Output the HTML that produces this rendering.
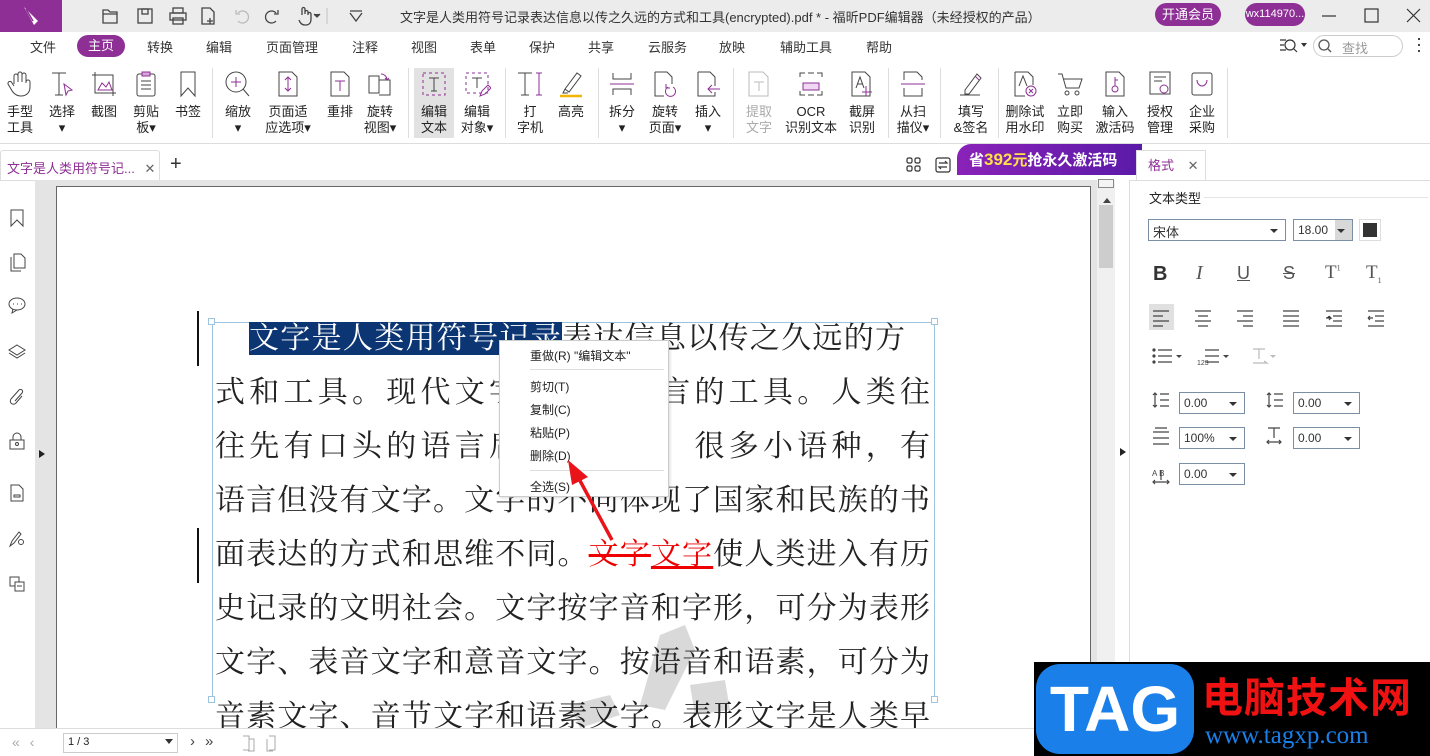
<!DOCTYPE html>
<html><head><meta charset="utf-8">
<style>
*{margin:0;padding:0;box-sizing:border-box}
body{width:1430px;height:756px;overflow:hidden;position:relative;background:#fff;font-family:"Liberation Sans","Noto Sans CJK SC",sans-serif;color:#333;font-size:13px}
.a{position:absolute}
.title{left:0;top:0;width:1430px;height:32px;background:#ececec}
.logo{left:0;top:0;width:62px;height:32px;background:#8e2f95}
.menu span{position:absolute;top:37px;font-size:13px;color:#333}
.rb{position:absolute;top:70px;width:44px;text-align:center;font-size:13px;line-height:16px;color:#222}
.rb svg{display:block;margin:0 auto 6px;width:28px;height:28px}
.sep{position:absolute;top:68px;width:1px;height:70px;background:#ddd}
.line{position:absolute;left:215px;width:715px;font-family:"Liberation Serif","Noto Serif CJK SC",serif;font-size:30px;line-height:40px;color:#222;text-align:justify;text-align-last:justify;white-space:nowrap;overflow:hidden}
.sb svg{position:absolute;left:7px;width:20px;height:20px}
.dd{position:absolute;height:22px;border:1px solid #7a8fa6;background:#fff;font-size:12px;padding:3px 4px}
.dd:after{content:"";position:absolute;right:7px;top:9px;border:4px solid transparent;border-top:4px solid #333}
</style></head><body>
<div class="a title"></div>
<div class="a logo"><svg width="62" height="32"><path d="M24 7 L38 21 L34 25 Z" fill="#fff"/><path d="M26 9 L33 21" stroke="#8e2f95" stroke-width="1.5"/></svg></div>
<svg class="a" style="left:100px;top:5px" width="270" height="22" fill="none" stroke="#444" stroke-width="1.3">
<path d="M3 5h5l2 2h7v11H3z M3 9h14"/>
<rect x="38" y="4" width="14" height="14"/><rect x="42" y="4" width="6" height="5"/>
<rect x="70" y="8" width="16" height="7"/><rect x="73" y="3" width="10" height="5"/><rect x="73" y="13" width="10" height="6"/>
<path d="M102 3h8l4 4v12h-12z M110 13v6 M107 16h6"/>
<path d="M138 8 a6 6 0 1 1 0 8 M136 5v4h4" stroke="#bbb"/>
<path d="M176 8 a6 6 0 1 0 0 8 M178 5v4h-4"/>
<path d="M202 10v-6a1.5 1.5 0 0 1 3 0v5 M205 9v-2a1.5 1.5 0 0 1 3 0v3 M208 9a1.5 1.5 0 0 1 3 0v5c0 4-2 6-5 6h-1c-3 0-5-2-6-5"/>
<path d="M214 9l3 3 3-3" fill="#444"/>
<path d="M227 3v16" stroke="#ccc"/>
<path d="M250 6h12 M250 8l6 8 6-8"/>
</svg>
<div class="a" style="left:400px;top:7px;font-size:13px;color:#333;white-space:nowrap">文字是人类用符号记录表达信息以传之久远的方式和工具(encrypted).pdf * - 福昕PDF编辑器（未经授权的产品）</div>
<div class="a" style="left:1155px;top:3px;width:66px;height:23px;border-radius:12px;background:#8e2f95;color:#fff;font-size:13px;line-height:23px;text-align:center">开通会员</div>
<div class="a" style="left:1245px;top:3px;width:60px;height:23px;border-radius:12px;background:#8e2f95;color:#fff;font-size:11px;line-height:23px;text-align:center">wx114970...</div>
<svg class="a" style="left:1315px;top:6px" width="110" height="20" stroke="#333" stroke-width="1.2" fill="none"><path d="M7 10h14"/><rect x="50" y="3" width="13" height="13"/><path d="M92 3l13 13 M105 3l-13 13"/></svg>
<div class="menu">
<span style="left:30px">文件</span>
<span style="left:77px;top:35px;width:48px;height:22px;border-radius:11px;background:#8e2f95;color:#fff;text-align:center;line-height:22px">主页</span>
<span style="left:147px">转换</span><span style="left:206px">编辑</span><span style="left:266px">页面管理</span><span style="left:352px">注释</span><span style="left:411px">视图</span><span style="left:470px">表单</span><span style="left:529px">保护</span><span style="left:588px">共享</span><span style="left:648px">云服务</span><span style="left:719px">放映</span><span style="left:780px">辅助工具</span><span style="left:866px">帮助</span>
</div>
<svg class="a" style="left:1278px;top:37px" width="30" height="16" fill="none" stroke="#333" stroke-width="1.2"><path d="M2 3h6 M2 8h4 M2 13h6"/><circle cx="12" cy="8" r="5"/><path d="M16 12l3 3"/><path d="M23 6l3 4 3-4z" fill="#333" stroke="none"/></svg>
<div class="a" style="left:1313px;top:35px;width:90px;height:22px;border:1px solid #ccc;border-radius:11px;font-size:13px;color:#999;padding:2px 0 0 28px">查找</div>
<svg class="a" style="left:1318px;top:39px" width="14" height="14" fill="none" stroke="#555" stroke-width="1.3"><circle cx="6" cy="6" r="5"/><path d="M10 10l3 3"/></svg>
<div class="a" style="left:1418px;top:38px;width:2px;height:2px;background:#444;box-shadow:0 6px #444,0 12px #444"></div>
<div class="a" style="left:414px;top:68px;width:40px;height:70px;background:#e2e2e2"></div>
<div class="sep" style="left:212px"></div><div class="sep" style="left:408px"></div><div class="sep" style="left:505px"></div><div class="sep" style="left:598px"></div><div class="sep" style="left:733px"></div><div class="sep" style="left:888px"></div><div class="sep" style="left:940px"></div><div class="sep" style="left:998px"></div><div class="sep" style="left:1227px"></div>
<div class="rb" style="left:-2px"><svg viewBox="0 0 28 28" fill="none" stroke="#444"><path d="M8 14V6a2 2 0 0 1 4 0v6 M12 11V4a2 2 0 0 1 4 0v8 M16 11V5a2 2 0 0 1 4 0v8 M20 12a2 2 0 0 1 4 0v5c0 6-4 9-9 9s-8-3-10-7l-3-5a2 2 0 0 1 4-1l2 3"/></svg>手型<br>工具</div>
<div class="rb" style="left:40px"><svg viewBox="0 0 28 28" fill="none" stroke="#444"><path d="M4 3h14 M11 3v22 M7 25h8"/><path d="M16 14l8 6-4 1-2 4z" stroke="#8e2f95"/></svg>选择<br>▾</div>
<div class="rb" style="left:82px"><svg viewBox="0 0 28 28" fill="none" stroke="#444"><path d="M5 2v21h21 M2 5h21v21"/><path d="M8 20l4-7 4 4 3-5 3 8z" stroke="#8e2f95"/></svg>截图</div>
<div class="rb" style="left:124px"><svg viewBox="0 0 28 28" fill="none" stroke="#444"><rect x="5" y="4" width="18" height="22" rx="2"/><rect x="10" y="2" width="8" height="4" fill="#d9a6dc" stroke="#8e2f95"/><path d="M9 11h10 M9 15h10 M9 19h10"/></svg>剪贴<br>板▾</div>
<div class="rb" style="left:166px"><svg viewBox="0 0 28 28" fill="none" stroke="#444"><path d="M7 2h14v24l-7-8-7 8z"/></svg>书签</div>
<div class="rb" style="left:216px"><svg viewBox="0 0 28 28" fill="none" stroke="#444"><circle cx="12" cy="12" r="10"/><path d="M19 19l6 7"/><path d="M12 7v10 M7 12h10" stroke="#8e2f95"/></svg>缩放<br>▾</div>
<div class="rb" style="left:262px;width:52px"><svg viewBox="0 0 28 28" fill="none" stroke="#444"><path d="M5 2h13l5 5v19H5z"/><path d="M14 7v14 M11 10l3-3 3 3 M11 18l3 3 3-3" stroke="#8e2f95"/></svg>页面适<br>应选项▾</div>
<div class="rb" style="left:318px"><svg viewBox="0 0 28 28" fill="none" stroke="#444"><path d="M5 2h13l5 5v19H5z"/><path d="M9 11h10 M14 11v10" stroke="#8e2f95"/></svg>重排</div>
<div class="rb" style="left:358px"><svg viewBox="0 0 28 28" fill="none" stroke="#444"><path d="M3 6h10v17H3z M13 10h11v15H13"/><path d="M15 4a6 6 0 0 1 6 6 M19 8l2 2 2-2" stroke="#8e2f95"/></svg>旋转<br>视图▾</div>
<div class="rb" style="left:412px"><svg viewBox="0 0 28 28" fill="none" stroke="#8e2f95"><path d="M3 3h22v22H3z" stroke-dasharray="3 3"/><path d="M9 8h10 M14 8v13 M11 21h6" stroke="#444"/></svg>编辑<br>文本</div>
<div class="rb" style="left:455px"><svg viewBox="0 0 28 28" fill="none" stroke="#8e2f95"><path d="M3 3h22v20H3z" stroke-dasharray="3 3"/><path d="M9 8h10 M14 8v10" stroke="#444"/><path d="M17 26l2-5 6-6 3 3-6 6z"/></svg>编辑<br>对象▾</div>
<div class="rb" style="left:508px"><svg viewBox="0 0 28 28" fill="none" stroke="#444"><path d="M2 3h14 M9 3v22 M5 25h8"/><path d="M20 3h6 M23 3v22 M20 25h6" stroke="#8e2f95"/></svg>打<br>字机</div>
<div class="rb" style="left:549px"><svg viewBox="0 0 28 28" fill="none" stroke="#444"><path d="M8 19l12-16 4 3-12 16z M8 19l-2 4h5"/><path d="M3 26h22" stroke="#f2b600" stroke-width="2.5"/></svg>高亮</div>
<div class="rb" style="left:600px"><svg viewBox="0 0 28 28" fill="none" stroke="#444"><path d="M5 3v6h18V3 M5 25v-6h18v6"/><path d="M2 14h24" stroke="#8e2f95"/></svg>拆分<br>▾</div>
<div class="rb" style="left:643px"><svg viewBox="0 0 28 28" fill="none" stroke="#444"><path d="M4 2h12l5 5v7 M4 2v24h9"/><path d="M17 17a5 5 0 1 0 5 0 M15 14v4h4" stroke="#8e2f95"/></svg>旋转<br>页面▾</div>
<div class="rb" style="left:686px"><svg viewBox="0 0 28 28" fill="none" stroke="#444"><path d="M4 2h12l5 5v9 M4 2v24h17v-4"/><path d="M26 19H14 M18 15l-4 4 4 4" stroke="#8e2f95"/></svg>插入<br>▾</div>
<div class="rb" style="left:737px;color:#aaa"><svg viewBox="0 0 28 28" fill="none" stroke="#bbb"><path d="M4 2h14l5 5v19H4z M9 12h10 M14 12v9"/></svg>提取<br>文字</div>
<div class="rb" style="left:781px;width:60px"><svg viewBox="0 0 28 28" fill="none" stroke="#444"><path d="M3 7V3h5 M20 3h5v4 M3 21v4h5 M20 25h5v-4 M11 3h6 M11 25h6"/><rect x="6" y="13" width="16" height="7" fill="#f0d8f2" stroke="#8e2f95"/></svg>OCR<br>识别文本</div>
<div class="rb" style="left:840px"><svg viewBox="0 0 28 28" fill="none" stroke="#444"><path d="M4 2h13l5 5v19H4z M8 18l4-11 4 11 M9 14h6"/><path d="M18 16v10 M14 22h10" stroke="#8e2f95"/></svg>截屏<br>识别</div>
<div class="rb" style="left:891px"><svg viewBox="0 0 28 28" fill="none" stroke="#444"><path d="M5 10V2h13l5 5v3 M5 18v8h18v-8"/><path d="M2 14h24" stroke="#8e2f95"/></svg>从扫<br>描仪▾</div>
<div class="rb" style="left:949px"><svg viewBox="0 0 28 28" fill="none" stroke="#444"><path d="M8 20l12-16 4 4-12 16H8z"/><path d="M18 6l4 4" stroke="#8e2f95"/><path d="M3 25h20"/></svg>填写<br>&amp;签名</div>
<div class="rb" style="left:1002px;width:46px"><svg viewBox="0 0 28 28" fill="none" stroke="#444"><path d="M4 2h13l5 5v8 M4 2v24h10 M8 16l4-10 4 10"/><circle cx="20" cy="21" r="5" stroke="#8e2f95"/><path d="M18 19l4 4 M22 19l-4 4" stroke="#8e2f95"/></svg>删除试<br>用水印</div>
<div class="rb" style="left:1048px"><svg viewBox="0 0 28 28" fill="none" stroke="#444"><path d="M2 4h4l4 14h13l3-9H8"/><circle cx="11" cy="23" r="2"/><circle cx="21" cy="23" r="2"/></svg>立即<br>购买</div>
<div class="rb" style="left:1093px"><svg viewBox="0 0 28 28" fill="none" stroke="#444"><path d="M5 2h13l5 5v19H5z"/><circle cx="14" cy="19" r="3" stroke="#8e2f95"/><path d="M14 16V7 M14 10h3" stroke="#8e2f95"/></svg>输入<br>激活码</div>
<div class="rb" style="left:1138px"><svg viewBox="0 0 28 28" fill="none" stroke="#444"><path d="M4 2h20v22H4z M8 7h12 M8 11h8"/><circle cx="18" cy="19" r="4" stroke="#8e2f95"/></svg>授权<br>管理</div>
<div class="rb" style="left:1180px"><svg viewBox="0 0 28 28" fill="none" stroke="#444"><rect x="4" y="3" width="20" height="22" rx="2"/><path d="M9 10a5 6 0 0 0 10 0" stroke="#8e2f95"/></svg>企业<br>采购</div>
<div class="a" style="left:0;top:143px;width:1430px;height:1px;background:#ddd"></div>
<div class="a" style="left:0;top:150px;width:160px;height:30px;border:1px solid #ddd;border-bottom:none;background:#fff;border-radius:3px 3px 0 0;font-size:13px;color:#8e2f95;padding:7px 0 0 6px">文字是人类用符号记... <span style="color:#666;margin-left:6px">✕</span></div>
<div class="a" style="left:170px;top:153px;font-size:20px;color:#333">+</div>
<svg class="a" style="left:905px;top:155px" width="50" height="20" fill="none" stroke="#333" stroke-width="1.2"><rect x="2" y="3" width="5" height="5" rx="1.5"/><rect x="10" y="3" width="5" height="5" rx="1.5"/><rect x="2" y="11" width="5" height="5" rx="1.5"/><rect x="10" y="11" width="5" height="5" rx="1.5"/><rect x="31" y="3" width="14" height="14" rx="2"/><path d="M34 8h8l-2-2 M42 12h-8l2 2"/></svg>
<div class="a" style="left:957px;top:144px;width:185px;height:31px;background:linear-gradient(90deg,#8a22b8,#5a1aa8);border-radius:14px 0 0 0;color:#fff;font-size:15px;font-weight:bold;line-height:31px;padding-left:12px">省<span style="color:#ffe14a;font-size:17px">392</span><span style="color:#ffe14a">元</span>抢永久激活码</div>
<div class="a" style="left:1136px;top:150px;width:70px;height:30px;border:1px solid #ddd;border-bottom:none;background:#fff;font-size:13px;color:#8e2f95;padding:4px 0 0 11px">格式 <span style="color:#666;margin-left:10px">✕</span></div>
<div class="a" style="left:0;top:180px;width:1430px;height:1px;background:#ddd"></div>
<div class="a" style="left:35px;top:180px;width:1062px;height:548px;background:#e4e4e4"></div>
<div class="a sb" style="left:0;top:181px;width:35px;height:547px;background:#fff">
<svg style="top:27px" viewBox="0 0 20 20" fill="none" stroke="#444"><path d="M4 2h12v16l-6-6-6 6z"/></svg>
<svg style="top:71px" viewBox="0 0 20 20" fill="none" stroke="#444"><path d="M7 2h7l4 4v10H7z M4 5v14h10"/></svg>
<svg style="top:114px" viewBox="0 0 20 20" fill="none" stroke="#444"><ellipse cx="10" cy="9" rx="8" ry="6"/><path d="M6 14l-1 4 5-3"/><path d="M6 9h1 M10 9h1 M14 9h1"/></svg>
<svg style="top:161px" viewBox="0 0 20 20" fill="none" stroke="#444"><path d="M10 3l8 5-8 5-8-5z M2 11l8 5 8-5"/></svg>
<svg style="top:206px" viewBox="0 0 20 20" fill="none" stroke="#444"><path d="M15 9l-6 7a3 3 0 0 1-5-4l8-9a2 2 0 0 1 3 3l-7 8"/></svg>
<svg style="top:250px" viewBox="0 0 20 20" fill="none" stroke="#444"><rect x="3" y="9" width="14" height="9"/><path d="M6 9V6a4 4 0 0 1 8 0v3"/><circle cx="10" cy="13" r="1.5"/></svg>
<svg style="top:302px" viewBox="0 0 20 20" fill="none" stroke="#444"><path d="M4 2h8l4 4v12H4z M7 12h6v2H7z"/></svg>
<svg style="top:348px" viewBox="0 0 20 20" fill="none" stroke="#444"><path d="M3 17l2-5 7-9 2 2-7 9z"/><circle cx="14" cy="13" r="2.5"/></svg>
<svg style="top:393px" viewBox="0 0 20 20" fill="none" stroke="#444"><rect x="3" y="3" width="9" height="9"/><rect x="8" y="8" width="9" height="9" fill="#fff"/><path d="M10 12h5"/></svg>
</div>
<div class="a" style="left:39px;top:450px;border:4px solid transparent;border-left:6px solid #222"></div>
<div class="a" style="left:56px;top:186px;width:1035px;height:560px;background:#fff;border:1px solid #666;border-bottom:none"></div>
<div class="a" style="left:197px;top:311px;width:2px;height:55px;background:#111"></div>
<div class="a" style="left:197px;top:528px;width:2px;height:55px;background:#111"></div>
<div class="a" style="left:212px;top:322px;width:723px;height:380px;border:1px solid #9cc3e0;border-bottom:none"></div>
<div class="a" style="left:208px;top:318px;width:7px;height:7px;border:1px solid #9cc3e0;background:#fff"></div>
<div class="a" style="left:931px;top:318px;width:7px;height:7px;border:1px solid #9cc3e0;background:#fff"></div>
<div class="a" style="left:208px;top:696px;width:7px;height:7px;border:1px solid #9cc3e0;background:#fff"></div>
<div class="a" style="left:931px;top:696px;width:7px;height:7px;border:1px solid #9cc3e0;background:#fff"></div>
<svg class="a" style="left:560px;top:615px" width="180" height="113" fill="#d9d9d9"><path d="M100 20 l25 -10 l10 25 l-30 60 l-25 -5z M10 90 l40 -10 l10 20 l-40 13z M130 70 l35 -5 l5 30 l-35 5z"/></svg>
<div class="line" style="left:249px;width:656px;top:319px"><span style="background:#0b3573;color:#fff">文字是人类用符号记录</span>表达信息以传之久远的方</div>
<div class="line" style="top:373px">式和工具。现代文字是记录语言的工具。人类往</div>
<div class="line" style="top:427px">往先有口头的语言后产生文字，很多小语种，有</div>
<div class="line" style="top:481px">语言但没有文字。文字的不同体现了国家和民族的书</div>
<div class="line" style="top:535px">面表达的方式和思维不同。<span style="color:#e00;text-decoration:line-through">文字</span><span style="color:#e00;text-decoration:underline">文字</span>使人类进入有历</div>
<div class="line" style="top:589px">史记录的文明社会。文字按字音和字形，可分为表形</div>
<div class="line" style="top:643px">文字、表音文字和意音文字。按语音和语素，可分为</div>
<div class="line" style="top:697px">音素文字、音节文字和语素文字。表形文字是人类早</div>
<div class="a" style="left:499px;top:340px;width:170px;height:157px;background:#fff;border:1px solid #ccc;box-shadow:1px 1px 3px rgba(0,0,0,.15);font-size:12px;color:#222">
<div class="a" style="left:30px;top:6px;white-space:nowrap">重做(R) "编辑文本"</div>
<div class="a" style="left:30px;top:28px;width:134px;height:1px;background:#ddd"></div>
<div class="a" style="left:30px;top:37px">剪切(T)</div>
<div class="a" style="left:30px;top:60px">复制(C)</div>
<div class="a" style="left:30px;top:83px">粘贴(P)</div>
<div class="a" style="left:30px;top:106px">删除(D)</div>
<div class="a" style="left:30px;top:129px;width:134px;height:1px;background:#ddd"></div>
<div class="a" style="left:30px;top:137px">全选(S)</div>
</div>
<svg class="a" style="left:560px;top:455px" width="60" height="90"><path d="M52 85 L18 22" stroke="#e8141a" stroke-width="3.5"/><path d="M8 5 L28 22 L12 30z" fill="#e8141a"/></svg>
<div class="a" style="left:1097px;top:180px;width:18px;height:548px;background:#f0f0f0"></div>
<div class="a" style="left:1098px;top:179px;width:16px;height:9px;border:1px solid #888;background:#f4f4f4"></div>
<div class="a" style="left:1103px;top:194px;border:4px solid transparent;border-bottom:5px solid #444"></div>
<div class="a" style="left:1099px;top:205px;width:14px;height:63px;background:#cdcdcd"></div>
<div class="a" style="left:1115px;top:180px;width:15px;height:548px;background:#fff;border-right:1px solid #ddd"></div>
<div class="a" style="left:1120px;top:448px;border:4px solid transparent;border-left:6px solid #222"></div>
<div class="a" style="left:1149px;top:188px;font-size:13px;color:#222">文本类型</div>
<div class="a" style="left:1204px;top:197px;width:224px;height:1px;background:#e4e4e4"></div>
<div class="dd" style="left:1148px;top:219px;width:138px;font-size:13px;padding-top:2px">宋体</div>
<div class="dd" style="left:1293px;top:219px;width:60px">18.00<span style="position:absolute;right:0;top:0;width:17px;height:20px;background:#d8d8d8"></span></div>
<div class="a" style="left:1359px;top:219px;width:22px;height:22px;border:1px solid #ddd;background:#fff"><div style="margin:3px;width:14px;height:14px;background:#333"></div></div>
<div class="a" style="left:1153px;top:263px;font-size:20px;font-weight:bold;color:#333">B</div>
<div class="a" style="left:1196px;top:262px;font-size:20px;font-style:italic;font-family:'Liberation Serif';color:#555">I</div>
<div class="a" style="left:1237px;top:263px;font-size:18px;color:#555;text-decoration:underline">U</div>
<div class="a" style="left:1283px;top:263px;font-size:18px;color:#555;text-decoration:line-through">S</div>
<div class="a" style="left:1325px;top:262px;font-size:19px;color:#555;font-family:'Liberation Serif'">T<sup style="font-size:8px">1</sup></div>
<div class="a" style="left:1366px;top:262px;font-size:19px;color:#555;font-family:'Liberation Serif'">T<sub style="font-size:8px">1</sub></div>
<div class="a" style="left:1149px;top:304px;width:25px;height:26px;background:#e0e0e0"></div>
<svg class="a" style="left:1150px;top:308px" width="240" height="20" stroke="#444" stroke-width="1.2"><path d="M3 3h16 M3 8h10 M3 13h16 M3 18h10"/><path d="M45 3h16 M48 8h10 M45 13h16 M48 18h10"/><path d="M87 3h16 M93 8h10 M87 13h16 M93 18h10"/><path d="M133 3h16 M133 8h16 M133 13h16 M133 18h16"/><path d="M176 3h16 M183 8h9 M183 13h9 M176 18h16 M176 10h5 l-2-2 M181 10 l-2 2"/><path d="M218 3h16 M225 8h9 M225 13h9 M218 18h16 M218 10h5 M218 10l2-2 M218 10l2 2"/></svg>
<svg class="a" style="left:1150px;top:346px" width="140" height="20" stroke="#444" stroke-width="1.2" fill="#444"><circle cx="4" cy="4" r="1"/><circle cx="4" cy="10" r="1"/><circle cx="4" cy="16" r="1"/><path d="M8 4h14 M8 10h14 M8 16h14" fill="none"/><path d="M26 9l3 3 3-3z" stroke="none"/><path d="M55 4h14 M55 10h14 M55 16h14" fill="none"/><text x="47" y="19" font-size="7" stroke="none">123</text><path d="M73 9l3 3 3-3z" stroke="none"/><path d="M103 3h12 M109 3v10 M103 17h14 l-3-2" fill="none" stroke="#bbb"/><path d="M120 9l3 3 3-3z" stroke="none" fill="#bbb"/></svg>
<svg class="a" style="left:1150px;top:390px" width="220" height="96" stroke="#444" stroke-width="1.2" fill="none"><path d="M5 3v14 M3 5l2-2 2 2 M3 15l2 2 2-2 M10 4h9 M10 10h9 M10 16h9"/><path d="M119 3v14 M117 5l2-2 2 2 M117 15l2 2 2-2 M124 4h9 M124 10h9 M124 16h9"/><path d="M3 42h16 M3 48h16 M3 54h16 M5 38h12"/><path d="M118 38h12 M124 38v10 M117 52h14 M119 50l-2 2 2 2 M129 50l2 2-2 2"/><path d="M3 92h16 M5 90l-2 2 2 2 M17 90l2 2-2 2 M11 80v10"/><text x="2" y="86" font-size="8" fill="#444" stroke="none">A B</text></svg>
<div class="dd" style="left:1179px;top:392px;width:66px">0.00</div>
<div class="dd" style="left:1293px;top:392px;width:67px">0.00</div>
<div class="dd" style="left:1179px;top:427px;width:66px">100%</div>
<div class="dd" style="left:1293px;top:427px;width:67px">0.00</div>
<div class="dd" style="left:1179px;top:463px;width:66px">0.00</div>
<div class="a" style="left:0;top:728px;width:1430px;height:28px;background:#fff;border-top:1px solid #ddd"></div>
<div class="a" style="left:12px;top:734px;font-size:14px;color:#aaa;letter-spacing:10px">«‹</div>
<div class="a" style="left:63px;top:733px;width:115px;height:20px;border:1px solid #ccc;font-size:11px;color:#222;padding:2px 4px">1 / 3<span style="position:absolute;right:4px;top:5px;border:4px solid transparent;border-top:5px solid #333"></span></div>
<div class="a" style="left:190px;top:733px;font-size:15px;color:#444;letter-spacing:10px">›»</div>
<svg class="a" style="left:240px;top:733px" width="50" height="20" fill="none" stroke="#aaa"><path d="M3 3h6v14H3 M9 6h5v12h-6"/><path d="M29 3h6v14h-6 M27 6h-0v12h6"/></svg>
<div class="a" style="left:1034px;top:662px;width:396px;height:94px;background:#000"></div>
<div class="a" style="left:1036px;top:664px;width:158px;height:90px;background:#1a7fe8;border-radius:24px;color:#fff;font-size:64px;font-weight:bold;line-height:90px;text-align:center;font-family:'Liberation Sans'">TAG</div>
<div class="a" style="left:1202px;top:664px;font-size:41px;font-weight:bold;color:#f01212;letter-spacing:1px;font-family:'Liberation Sans','Noto Sans CJK SC',sans-serif">电脑技术网</div>
<div class="a" style="left:1205px;top:722px;font-size:25px;color:#1a7fe8;font-family:'Liberation Serif',serif">www.tagxp.com</div>
</body></html>
